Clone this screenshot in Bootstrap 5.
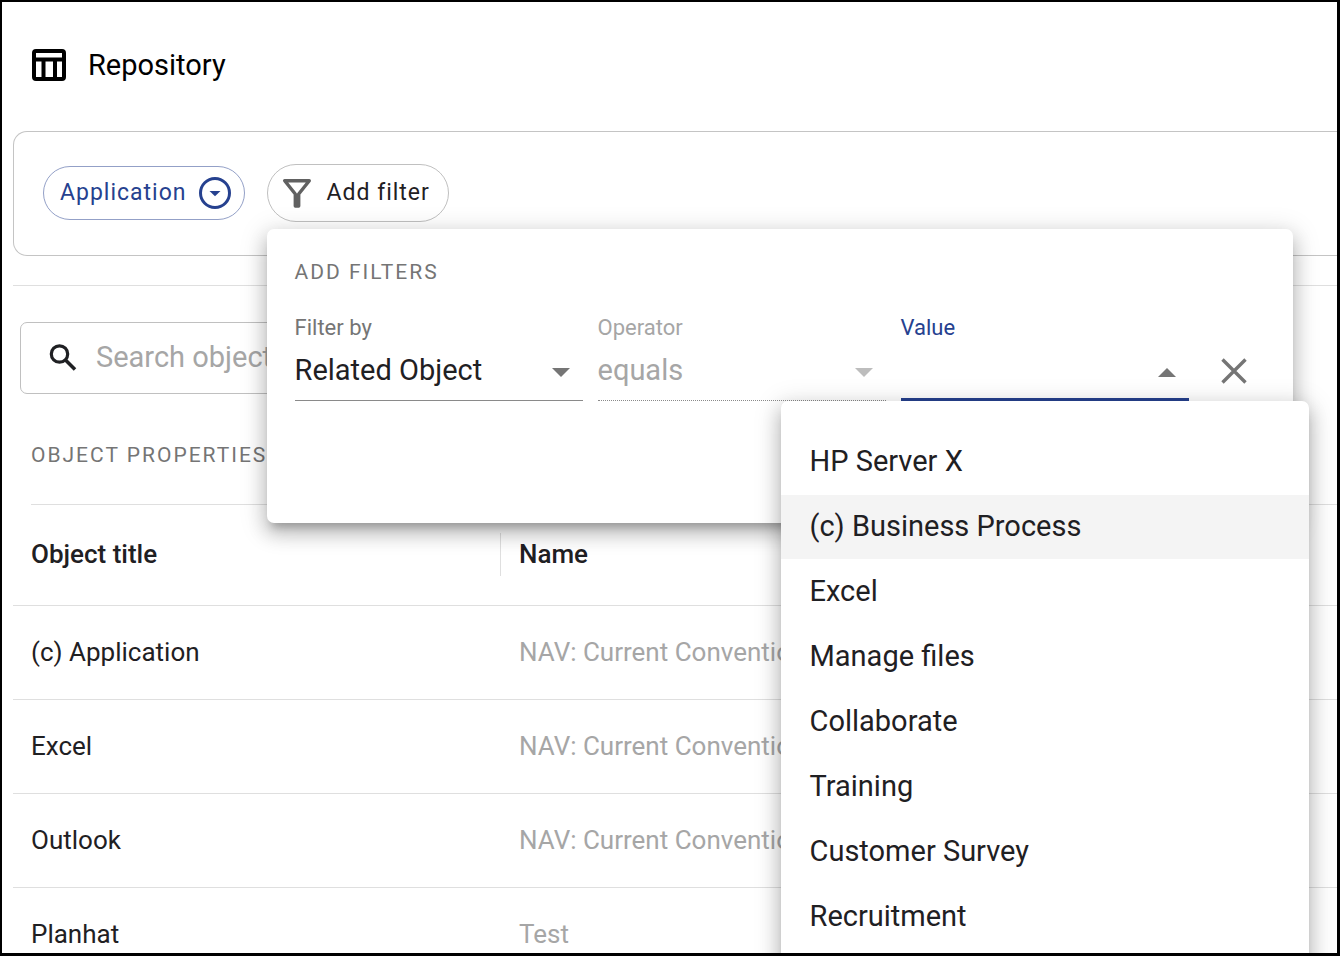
<!DOCTYPE html>
<html lang="en">
<head>
<meta charset="utf-8">
<meta name="viewport" content="width=device-width, initial-scale=1">
<title>Repository</title>
<link href="https://cdn.jsdelivr.net/npm/bootstrap@5.3.0/dist/css/bootstrap.min.css" rel="stylesheet">
<style>
  :root { --ink: #1f2023; --muted: #757575; --faint: #a6a6a6; --brand: #26418f; --rule: #dfdfdf; }
  body { font-family: Roboto, sans-serif; color: var(--ink); height: 100vh; overflow: hidden; background: #fff; }
  .frame { height: 100vh; border: 2px solid #000; border-right-width: 3px; border-bottom-width: 3px; overflow: hidden; }
  .page-title { font-size: 29px; line-height: 36px; color: #000; font-weight: 400; }
  .top-bar { height: 129px; padding: 0 29px 4px; gap: 21px; }
  .filter-panel { margin-left: 11px; height: 125px; padding: 0 29px 2px; gap: 22px; border: 1px solid #c4c4c4; border-right: 0; border-radius: 14px 0 0 14px; }
  .chip { font-size: 23px; letter-spacing: 1px; line-height: 28px; border-radius: 29px; background: #fff; color: var(--ink); border: 1px solid #c0c0c0; padding: 0 18px 0 13px; height: 58px; gap: 14px; }
  .chip-type { color: var(--brand); border-color: #93a0c7; height: 54px; padding: 0 13px 0 16px; gap: 12px; }
  .divider { margin: 29px 0 0 11px; border-top: 1px solid var(--rule); }
  .filter-pop { position: absolute; top: 65px; left: 0; z-index: 10; width: 1026px; height: 294px; padding: 29px 28px; background: #fff; border-radius: 7px; }
  .filter-pop, .value-menu { box-shadow: 0 9px 9px -5px rgba(0,0,0,.22), 0 10px 18px 2px rgba(0,0,0,.16), 0 5px 26px 4px rgba(0,0,0,.13); }
  .caps { font-size: 21px; letter-spacing: 2px; line-height: 28px; font-weight: 400; color: var(--muted); text-transform: uppercase; white-space: nowrap; }
  .fields { gap: 15px; margin-top: 28px; }
  .field { width: 288px; }
  .field label { display: block; font-size: 22px; line-height: 28px; color: var(--muted); }
  .field select { display: block; width: 100%; height: 59px; padding: 0 44px 0 0; appearance: none; border: 0; border-bottom: 1px solid #8a8a8a; border-radius: 0; background: transparent; font-size: 29px; color: var(--ink); outline: 0; opacity: 1; }
  .field .arrow { position: absolute; right: 13px; bottom: 24px; pointer-events: none; }
  .field.is-off label, .field.is-off select { color: var(--faint); }
  .field.is-off select { border-bottom-style: dotted; }
  .field.is-open label { color: var(--brand); }
  .field.is-open select { border-bottom: 3px solid var(--brand); }
  .value-menu { top: 100%; left: 50%; transform: translateX(-50%); width: 528px; padding: 29px 0; margin: 0; border: 0; border-radius: 7px; }
  .value-menu .dropdown-item { height: 64px; margin-bottom: 1px; padding: 0 29px; font-size: 29px; color: var(--ink); }
  .value-menu .dropdown-item.is-hover { background: #f4f4f4; }
  .remove { height: 26px; margin: 44px 0 0 17px; line-height: 0; }
  .search-box { margin: 36px 64px 0 18px; height: 72px; padding: 0 25px; gap: 16px; border: 1px solid #c0c0c0; border-radius: 7px; }
  .search-box input { border: 0; outline: 0; font-size: 29px; color: var(--ink); background: transparent; }
  .search-box input::placeholder { color: var(--faint); opacity: 1; }
  .section-head { margin-left: 29px; padding: 47px 0 35px; border-bottom: 1px solid var(--rule); }
  .objects { margin-left: 11px; table-layout: fixed; width: calc(100% - 11px); }
  .objects th, .objects td { padding: 0 18px; border-bottom: 1px solid var(--rule); font-size: 26px; font-weight: 400; white-space: nowrap; vertical-align: middle; }
  .objects tr { height: 94px; }
  .objects thead tr { height: 100px; }
  .objects thead th { font-weight: 500; }
  .objects .title-col { width: 488px; }
  .objects thead .title-col > div { margin-right: -18px; height: 43px; line-height: 43px; border-right: 1px solid var(--rule); }
  .objects td { color: var(--faint); }
</style>
</head>
<body>
<div class="frame">
  <header class="top-bar d-flex align-items-center">
    <svg width="36" height="34" viewBox="0 0 36 34" fill="none" stroke="#000" stroke-width="4" aria-hidden="true"><rect x="3" y="3" width="30" height="28" rx="2"/><path d="M3 11.500H33M12.500 12V31M24 12V31"/></svg>
    <h1 class="page-title m-0">Repository</h1>
  </header>

  <main>
    <section class="filter-panel d-flex align-items-center">
      <button type="button" class="chip chip-type d-flex align-items-center">Application
        <svg width="32" height="32" viewBox="0 0 32 32" aria-hidden="true"><circle cx="16" cy="16" r="14.500" fill="none" stroke="#26418f" stroke-width="3"/><path d="M10.500 14H21.500L16 19.200Z" fill="#26418f"/></svg>
      </button>
      <div class="position-relative">
        <button type="button" class="chip d-flex align-items-center" aria-expanded="true">
          <svg width="32" height="32" viewBox="0 0 32 32" fill="none" stroke="#616161" stroke-width="3.400" stroke-linejoin="round" aria-hidden="true"><path d="M3.700 3.700H28.300L17.700 17V29H14.300V17Z"/><path d="M16 17V29" stroke-width="4"/></svg>
          Add filter
        </button>
        <div class="filter-pop" role="dialog" aria-labelledby="popTitle">
          <h2 class="caps m-0" id="popTitle">Add filters</h2>
          <div class="fields d-flex">
            <div class="field position-relative">
              <label for="filterBy">Filter by</label>
              <select id="filterBy"><option>Related Object</option></select>
              <svg class="arrow" width="18" height="9" aria-hidden="true"><path d="M0 0H18L9 9Z" fill="#757575"/></svg>
            </div>
            <div class="field is-off position-relative">
              <label for="operator">Operator</label>
              <select id="operator" disabled><option>equals</option></select>
              <svg class="arrow" width="18" height="9" aria-hidden="true"><path d="M0 0H18L9 9Z" fill="#bdbdbd"/></svg>
            </div>
            <div class="field is-open position-relative">
              <label for="value">Value</label>
              <select id="value"><option></option></select>
              <svg class="arrow" width="18" height="9" aria-hidden="true"><path d="M0 9H18L9 0Z" fill="#757575"/></svg>
              <div class="dropdown-menu value-menu show">
                <button type="button" class="dropdown-item">HP Server X</button>
                <button type="button" class="dropdown-item is-hover">(c) Business Process</button>
                <button type="button" class="dropdown-item">Excel</button>
                <button type="button" class="dropdown-item">Manage files</button>
                <button type="button" class="dropdown-item">Collaborate</button>
                <button type="button" class="dropdown-item">Training</button>
                <button type="button" class="dropdown-item">Customer Survey</button>
                <button type="button" class="dropdown-item">Recruitment</button>
              </div>
            </div>
            <button type="button" class="remove btn p-0 border-0" aria-label="Remove filter">
              <svg width="26" height="26" viewBox="0 0 26 26" stroke="#757575" stroke-width="3.400" aria-hidden="true"><path d="M1.500 1.500L24.500 24.500M24.500 1.500L1.500 24.500"/></svg>
            </button>
          </div>
        </div>
      </div>
    </section>

    <div class="divider"></div>

    <div class="search-box d-flex align-items-center">
      <svg width="34" height="34" viewBox="0 0 34 34" fill="none" stroke="#1f2023" stroke-width="3.200" aria-hidden="true"><circle cx="13.500" cy="13" r="8.200"/><path d="M19.500 19L29 28.500" stroke-width="3.600"/></svg>
      <input type="search" class="flex-grow-1 p-0" placeholder="Search objects" aria-label="Search objects">
    </div>

    <div class="section-head"><h2 class="caps m-0">Object properties</h2></div>

    <table class="objects">
      <thead>
        <tr><th class="title-col" scope="col"><div>Object title</div></th><th scope="col">Name</th></tr>
      </thead>
      <tbody>
        <tr><th scope="row">(c) Application</th><td>NAV: Current Conventions</td></tr>
        <tr><th scope="row">Excel</th><td>NAV: Current Conventions</td></tr>
        <tr><th scope="row">Outlook</th><td>NAV: Current Conventions</td></tr>
        <tr><th scope="row">Planhat</th><td>Test</td></tr>
      </tbody>
    </table>
  </main>
</div>
<script src="https://cdn.jsdelivr.net/npm/bootstrap@5.3.0/dist/js/bootstrap.bundle.min.js"></script>
</body>
</html>
